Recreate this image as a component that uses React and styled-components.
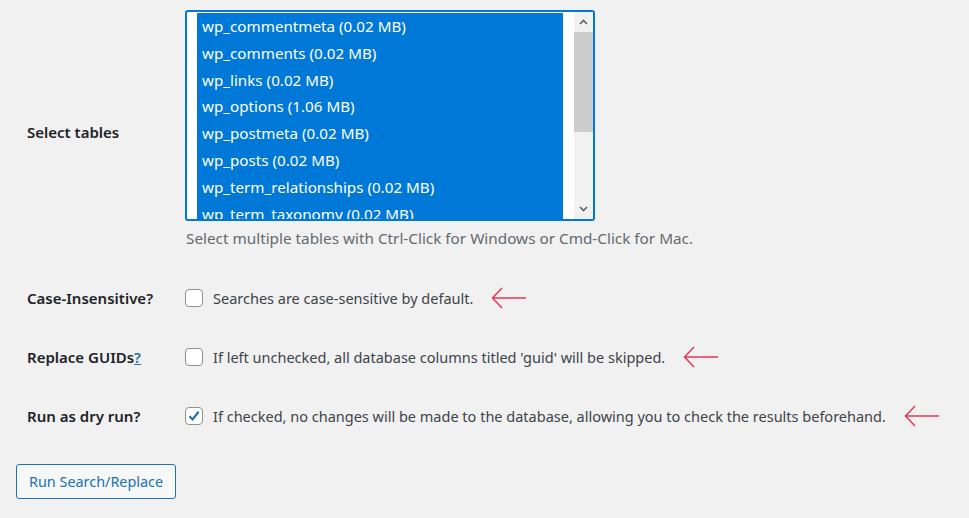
import React from "react";
import styled, { createGlobalStyle } from "styled-components";

const GlobalStyle = createGlobalStyle`
  html, body {
    margin: 0;
    padding: 0;
    background: #f1f1f1;
  }
  body {
    font-family: "Noto Sans", "Open Sans", sans-serif;
    font-size: 14px;
    color: #3c434a;
  }
`;

const tables = [
  "wp_commentmeta (0.02 MB)",
  "wp_comments (0.02 MB)",
  "wp_links (0.02 MB)",
  "wp_options (1.06 MB)",
  "wp_postmeta (0.02 MB)",
  "wp_posts (0.02 MB)",
  "wp_term_relationships (0.02 MB)",
  "wp_term_taxonomy (0.02 MB)",
];

const Page = styled.div`
  width: 969px;
  height: 518px;
  padding: 10px 0 0 16px;
  box-sizing: border-box;
  overflow: hidden;
`;

const FormTable = styled.div`
  display: grid;
  grid-template-columns: 158px 1fr;
  padding-left: 11px;
`;

const Label = styled.div`
  display: flex;
  align-items: center;
  font-size: 15px;
  font-weight: 600;
  color: #1d2327;
  height: ${(p) => p.$h}px;
  margin-top: ${(p) => p.$mt || 0}px;
  padding-top: ${(p) => p.$pt || 0}px;
  box-sizing: border-box;

  a {
    color: #2271b1;
    text-decoration: underline;
  }
`;

const Field = styled.div`
  display: flex;
  flex-direction: ${(p) => (p.$column ? "column" : "row")};
  align-items: ${(p) => (p.$column ? "flex-start" : "center")};
  height: ${(p) => p.$h}px;
  margin-top: ${(p) => p.$mt || 0}px;
`;

const ListBox = styled.div`
  width: 410px;
  height: 211px;
  flex-shrink: 0;
  box-sizing: border-box;
  border: 2px solid #0078d7;
  border-radius: 3px;
  background: #fff;
  display: flex;
  overflow: hidden;
`;

const Options = styled.div`
  flex: 1;
  padding: 1px 11px 0 10px;
  overflow: hidden;
`;

const Option = styled.div`
  height: 26.8px;
  line-height: 26.8px;
  padding-left: 5px;
  font-size: 15.2px;
  background: #0078d7;
  color: #fff;
  white-space: nowrap;
`;

const Scrollbar = styled.div`
  width: 19px;
  background: #f1f1f1;
  display: flex;
  flex-direction: column;
  align-items: center;
`;

const ScrollArrow = styled.div`
  height: 20px;
  display: flex;
  align-items: center;
  justify-content: center;
`;

const Thumb = styled.div`
  width: 100%;
  height: 100px;
  background: #cdcdcd;
`;

const Spacer = styled.div`
  flex: 1;
`;

const Description = styled.p`
  margin: 7px 0 0 1px;
  color: #646970;
  font-size: 15.3px;
  line-height: 20px;
  white-space: nowrap;
`;

const Check = styled.span`
  width: 18px;
  height: 18px;
  box-sizing: border-box;
  border: 1px solid #8c8f94;
  border-radius: 4px;
  background: #fff;
  display: inline-flex;
  align-items: center;
  justify-content: center;
  margin-right: 10px;
  flex-shrink: 0;
`;

const CheckText = styled.span`
  color: #3c434a;
  font-size: 14.5px;
  white-space: nowrap;
`;

const Arrow = styled.svg`
  margin-left: 18px;
  flex-shrink: 0;
`;

const Button = styled.button`
  margin-top: 37px;
  height: 35px;
  padding: 0 12px;
  border: 1px solid #2271b1;
  border-radius: 3px;
  background: #f6f7f7;
  color: #2271b1;
  font-family: inherit;
  font-size: 14.4px;
  cursor: pointer;
`;

const Chevron = ({ up }) => (
  <svg width="9" height="6" viewBox="0 0 9 6">
    <path
      d={up ? "M1 5L4.5 1.5L8 5" : "M1 1L4.5 4.5L8 1"}
      fill="none"
      stroke="#606060"
      strokeWidth="1.6"
    />
  </svg>
);

const RedArrow = () => (
  <Arrow width="36" height="22" viewBox="0 0 36 22">
    <path
      d="M35 11H2M11 1L1.5 11L11 21"
      fill="none"
      stroke="#e8365d"
      strokeWidth="1.5"
    />
  </Arrow>
);

const Checkbox = ({ checked }) => (
  <Check>
    {checked && (
      <svg width="14" height="14" viewBox="0 0 14 14">
        <path
          d="M2.5 7.2L5.6 10.4L11.6 2.8"
          fill="none"
          stroke="#2271b1"
          strokeWidth="2.2"
        />
      </svg>
    )}
  </Check>
);

const options = [
  {
    label: "Case-Insensitive?",
    text: "Searches are case-sensitive by default.",
  },
  {
    label: "Replace GUIDs",
    help: true,
    text: "If left unchecked, all database columns titled 'guid' will be skipped.",
  },
  {
    label: "Run as dry run?",
    checked: true,
    text: "If checked, no changes will be made to the database, allowing you to check the results beforehand.",
  },
];

export default function App() {
  return (
    <>
      <GlobalStyle />
      <Page>
        <FormTable>
          <Label $h={240} $pt={4}>Select tables</Label>
          <Field $column $h={240}>
            <ListBox>
              <Options>
                {tables.map((t) => (
                  <Option key={t}>{t}</Option>
                ))}
              </Options>
              <Scrollbar>
                <ScrollArrow>
                  <Chevron up />
                </ScrollArrow>
                <Thumb />
                <Spacer />
                <ScrollArrow>
                  <Chevron />
                </ScrollArrow>
              </Scrollbar>
            </ListBox>
            <Description>
              Select multiple tables with Ctrl-Click for Windows or Cmd-Click for Mac.
            </Description>
          </Field>
          {options.map((o) => (
            <React.Fragment key={o.label}>
              <Label $h={22} $mt={37}>
                <span>
                  {o.label}
                  {o.help && <a href="#guid">?</a>}
                </span>
              </Label>
              <Field $h={22} $mt={37}>
                <Checkbox checked={o.checked} />
                <CheckText>{o.text}</CheckText>
                <RedArrow />
              </Field>
            </React.Fragment>
          ))}
        </FormTable>
        <Button>Run Search/Replace</Button>
      </Page>
    </>
  );
}
